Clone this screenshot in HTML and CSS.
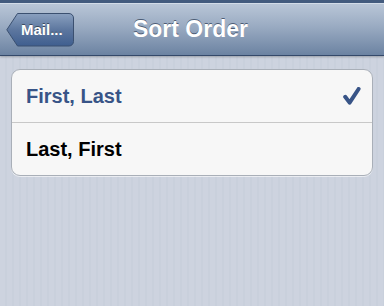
FILE: index.html
```html
<!DOCTYPE html>
<html lang="en">
<head>
<meta charset="UTF-8">
<meta name="viewport" content="width=device-width, initial-scale=1.0">
<title>Sort Order</title>
<link rel="stylesheet" href="styles.css">
</head>
<body>

<div class="navbar">
    <div class="nav-left">
        <button class="back-btn">
            <svg class="back-shape" width="68" height="34" viewBox="0 0 68 34">
                <defs>
                    <linearGradient id="btnGrad" x1="0" y1="0" x2="0" y2="1">
                        <stop offset="0" stop-color="#8aa0bf"/>
                        <stop offset="0.5" stop-color="#5d779f"/>
                        <stop offset="1" stop-color="#3f5e8f"/>
                    </linearGradient>
                </defs>
                <path d="M11.5 0.5 H63 a4.5 4.5 0 0 1 4.5 4.5 V28.5 a4.5 4.5 0 0 1 -4.5 4.5 H11.5 L0.8 16.8 Z"
                      fill="url(#btnGrad)" stroke="#3b5070" stroke-width="1"/>
            </svg>
            <span class="back-label">Mail...</span>
        </button>
    </div>
    <h1 class="nav-title">Sort Order</h1>
    <div class="nav-right"></div>
</div>

<div class="content">
    <div class="group">
        <div class="row selected">
            <span>First, Last</span>
            <svg class="check" width="18" height="18" viewBox="0 0 18 18">
                <path d="M2.2 9.8 L6.6 15.6 L15.6 2" fill="none" stroke="#385487" stroke-width="4" stroke-linecap="round" stroke-linejoin="round"/>
            </svg>
        </div>
        <div class="row">
            <span>Last, First</span>
        </div>
    </div>
</div>

</body>
</html>
```

FILE: styles.css
```css
html {
    height: 100%;
    background-color: #cdd3df;
    background-image: repeating-linear-gradient(90deg, #cdd3df 0, #cdd3df 5px, #c9d0dc 5px, #c9d0dc 7px);
}
body {
    margin: 0;
    padding: 0;
    font-family: "Liberation Sans", Arial, sans-serif;
}
.navbar {
    display: grid;
    grid-template-columns: 1fr auto 1fr;
    align-items: center;
    height: 52px;
    border-top: 3px solid #435b7e;
    border-bottom: 1px solid #34496a;
    background: linear-gradient(#bac7d8, #9aabc2 45%, #6c83a2);
    box-shadow: inset 0 1px 0 #d3dce8, 0 1px 2px rgba(0, 0, 0, 0.25);
}
.nav-left {
    padding-left: 6px;
}
.back-btn {
    position: relative;
    display: flex;
    align-items: center;
    width: 68px;
    height: 34px;
    margin-top: 1px;
    padding: 0 0 0 15px;
    border: none;
    background: none;
    cursor: pointer;
}
.back-shape {
    position: absolute;
    left: 0;
    top: 0;
}
.back-label {
    position: relative;
    font-family: "Liberation Sans", Arial, sans-serif;
    font-size: 15px;
    font-weight: bold;
    color: #ffffff;
    text-shadow: 0 -1px 0 rgba(0, 0, 0, 0.45);
}
.nav-title {
    margin: 0 0 0 -3px;
    font-size: 23px;
    font-weight: bold;
    color: #ffffff;
    text-shadow: 0 -1px 0 rgba(40, 55, 80, 0.7);
}
.content {
    padding: 13px 11px;
}
.group {
    background-color: #f7f7f7;
    border: 1px solid #a9afb8;
    border-radius: 9px;
    box-shadow: 0 1px 0 rgba(255, 255, 255, 0.6);
    overflow: hidden;
}
.row {
    display: flex;
    align-items: center;
    justify-content: space-between;
    height: 52px;
    padding: 0 11px 0 14px;
    font-size: 20px;
    font-weight: bold;
    color: #000000;
}
.row + .row {
    border-top: 1px solid #c8c8c8;
}
.row.selected {
    color: #385487;
}
```
